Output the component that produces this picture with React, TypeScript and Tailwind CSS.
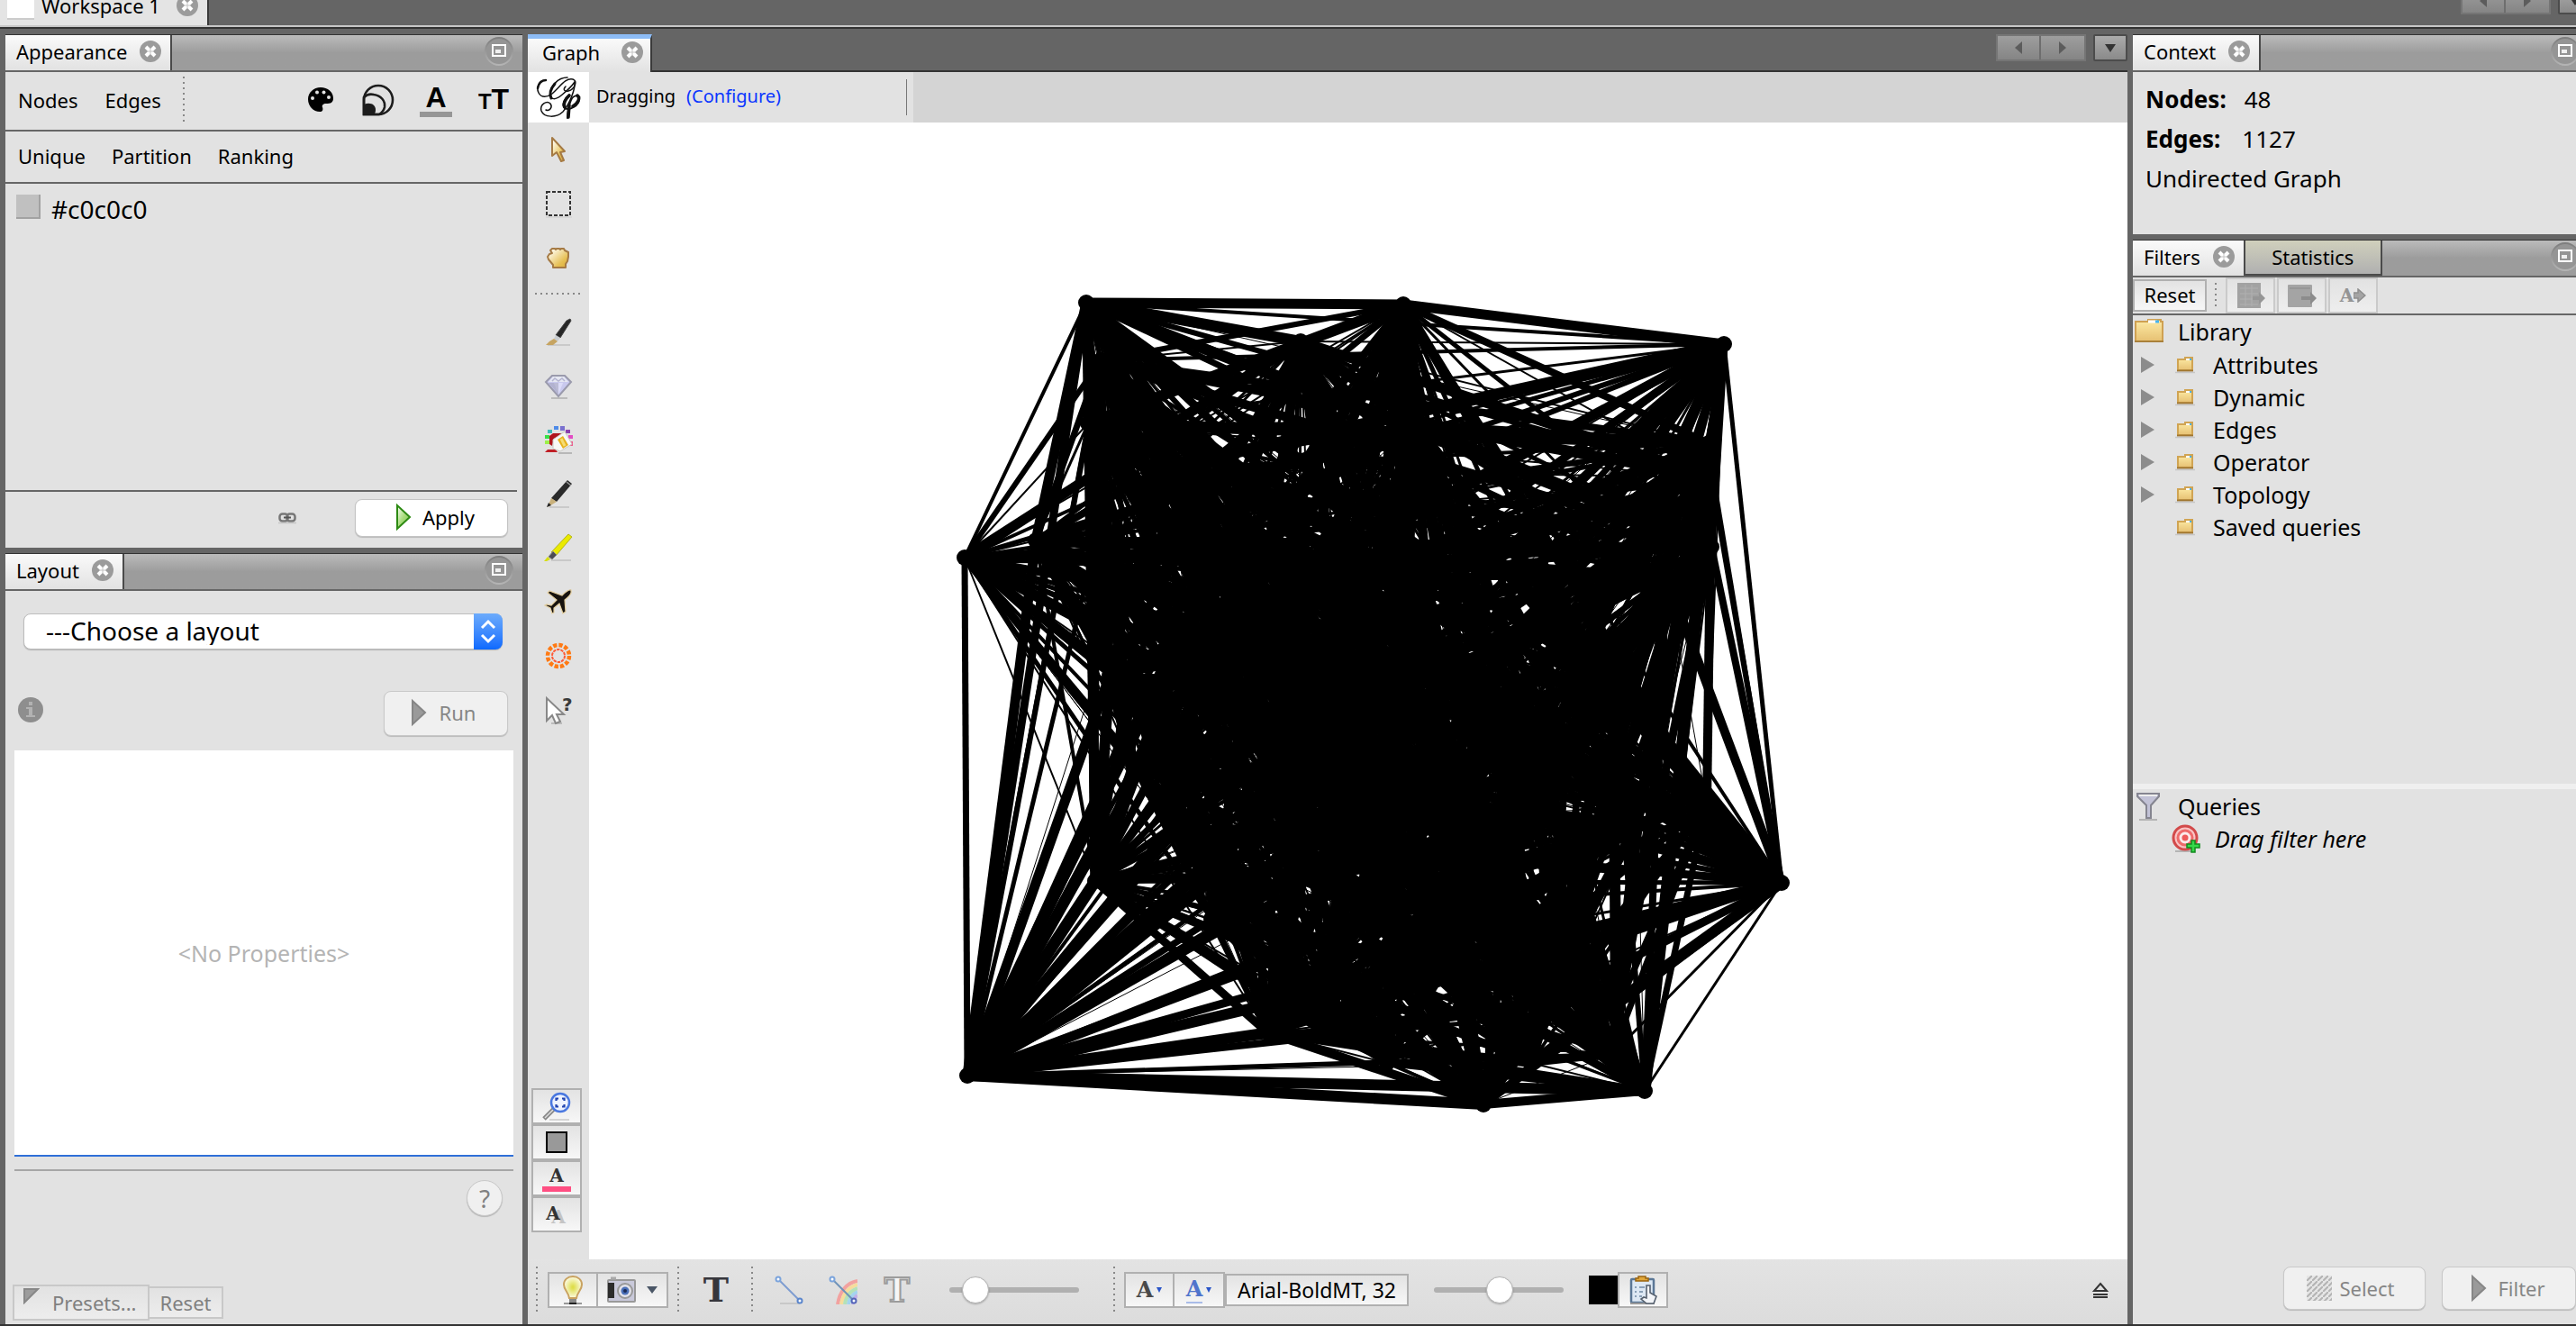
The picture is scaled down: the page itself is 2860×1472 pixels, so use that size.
import type { ReactNode } from "react";

/* ---------- shared chrome ---------- */

function CloseIcon() {
  return (
    <svg width="24" height="24" viewBox="0 0 24 24" aria-hidden="true">
      <circle cx="12" cy="12" r="12" fill="#9b9b9b" />
      <path d="M7 7l10 10M17 7L7 17" stroke="#fff" strokeWidth="4" />
      <path d="M12 8.5v7M8.5 12h7" stroke="#c4c4c4" strokeWidth="1" />
    </svg>
  );
}

function MinimizeButton({ label }: { label: string }) {
  return (
    <button type="button" aria-label={label} className="flex h-8 w-8 shrink-0 items-center justify-center">
      <svg width="32" height="32" viewBox="0 0 32 32" aria-hidden="true">
        <defs>
          <linearGradient id="minRing" x1="0" y1="0" x2="0" y2="1">
            <stop offset="0" stopColor="#7d7d7d" />
            <stop offset="1" stopColor="#b4b4b4" />
          </linearGradient>
        </defs>
        <circle cx="16" cy="16" r="15" fill="#959595" stroke="url(#minRing)" strokeWidth="2" />
        <rect x="9" y="9" width="14" height="12" fill="none" stroke="#fff" strokeWidth="2" />
        <rect x="12" y="14" width="6" height="4" fill="#f0f0f0" />
      </svg>
    </button>
  );
}

function ActiveTab({ title }: { title: string }) {
  return (
    <div className="flex h-full items-center gap-3.5 border-r-2 border-[#4a4a4a] bg-linear-to-b from-[#fafafa] to-[#e2e2e2] pb-1 pl-3 pr-2.5">
      <h2 className="text-[22px] leading-7">{title}</h2>
      <button type="button" aria-label={"Close " + title}>
        <CloseIcon />
      </button>
    </div>
  );
}

function PanelHeader({ title, children, flush }: { title: string; children?: ReactNode; flush?: boolean }) {
  return (
    <header className="flex h-[42px] shrink-0 items-center border-b-2 border-t border-b-[#666] border-t-[#333] bg-linear-to-b from-[#bbb] via-[#9c9c9c] to-[#9c9c9c]">
      <ActiveTab title={title} />
      {children}
      <div className={flush ? "-mr-1 ml-auto pb-1" : "ml-auto pb-1 pr-2.5"}>
        <MinimizeButton label={"Minimize " + title} />
      </div>
    </header>
  );
}

function VDots({ className = "h-[52px]" }: { className?: string }) {
  return (
    <span
      aria-hidden="true"
      className={
        "w-0.5 shrink-0 bg-[repeating-linear-gradient(to_bottom,#888_0_2px,transparent_2px_6px)] " + className
      }
    />
  );
}

function PlayIcon({ tone }: { tone: "green" | "gray" }) {
  return (
    <svg width="18" height="32" viewBox="0 0 18 32" aria-hidden="true">
      <defs>
        <linearGradient id="playGreen" x1="0" y1="0" x2="1" y2="1">
          <stop offset="0" stopColor="#fff" />
          <stop offset="0.5" stopColor="#a8dc7c" />
          <stop offset="1" stopColor="#7cc64e" />
        </linearGradient>
      </defs>
      {tone === "green" ? (
        <path d="M2 3v26L16 16z" fill="url(#playGreen)" stroke="#2c8a12" strokeWidth="2" />
      ) : (
        <path d="M2 3v26L16 16z" fill="#9a9a9a" stroke="#868686" strokeWidth="2" />
      )}
    </svg>
  );
}

function PushButton({ children, disabled, className }: { children: ReactNode; disabled?: boolean; className: string }) {
  return (
    <button
      type="button"
      disabled={disabled}
      className={
        "flex items-center justify-center rounded-lg border text-[22px] leading-7 shadow-[0_1px_1px_rgba(0,0,0,0.18)] " +
        (disabled ? "border-[#c9c9c9] bg-[#f0f0f0] text-[#868686] " : "border-[#c4c4c4] bg-white text-black ") +
        className
      }
    >
      {children}
    </button>
  );
}

/* ---------- left column ---------- */

function AppearancePanel() {
  return (
    <section className="flex h-[570px] shrink-0 flex-col bg-[#e2e2e2]">
      <PanelHeader title="Appearance" />
      <div className="flex h-[66px] shrink-0 items-center border-b-2 border-[#666] pb-0.5 pl-3.5 pr-3.5 text-[22px] leading-7">
        <button type="button">Nodes</button>
        <button type="button" className="ml-[30px]">Edges</button>
        <VDots className="ml-6 h-[52px]" />
        <div className="ml-auto flex items-center gap-7">
          <button type="button" aria-label="Color" className="flex w-9 justify-center">
            <svg width="28" height="30" viewBox="0 0 28 30">
              <path
                d="M14 1C6 1 0 7 0 14c0 8 6 14 13 14 3 0 4-2 3-5-1-2 1-4 4-4 5 0 8-1 8-6C28 6 22 1 14 1z"
                fill="#000"
              />
              <g fill="#e2e2e2">
                <circle cx="5" cy="13" r="2" />
                <circle cx="10" cy="6.500" r="2" />
                <circle cx="17.500" cy="6.500" r="2" />
                <circle cx="23" cy="12" r="2" />
              </g>
            </svg>
          </button>
          <button type="button" aria-label="Size">
            <svg width="36" height="36" viewBox="0 0 36 36">
              <path d="M2 34V18a16 16 0 1 1 16 16z" fill="none" stroke="#1c1c1c" strokeWidth="2.600" />
              <path d="M2 34V15c3-3 7-4 11-3 8 1 13 7 12 14-1 4-3 6-6 8z" fill="none" stroke="#1c1c1c" strokeWidth="2.600" />
              <path d="M2 35V23c7-3 13 0 13 6 0 3-1 5-3 6z" fill="#1c1c1c" />
            </svg>
          </button>
          <button type="button" aria-label="Label color" className="flex w-9 flex-col items-center border-b-[6px] border-[#969696]">
            <span className="font-['Liberation_Sans'] text-[32px] font-bold leading-8">A</span>
          </button>
          <button type="button" aria-label="Label size" className="flex w-9 items-baseline justify-center font-['Liberation_Sans'] font-bold">
            <span className="text-[24px] leading-8">T</span>
            <span className="text-[32px] leading-8">T</span>
          </button>
        </div>
      </div>
      <div className="flex h-[58px] shrink-0 items-center gap-[29px] border-b-2 border-[#666] pb-0.5 pl-3.5 text-[22px] leading-7">
        <button type="button">Unique</button>
        <button type="button">Partition</button>
        <button type="button">Ranking</button>
      </div>
      <div className="flex flex-1 items-start gap-3 px-3 pt-3">
        <button type="button" aria-label="Pick color" className="h-[27px] w-[27px] border-b-2 border-r-2 border-[#a2a2a2] bg-[#c0c0c0]" />
        <span className="text-[28px] leading-8">#c0c0c0</span>
      </div>
      <footer className="mr-1.5 flex h-16 shrink-0 items-center justify-end border-t-2 border-[#666] pb-1 pr-2.5">
        <button type="button" aria-label="Link elements" className="mr-16">
          <svg width="22" height="14" viewBox="0 0 22 14">
            <rect x="2.500" y="2.500" width="9" height="8" rx="3" fill="none" stroke="#777" strokeWidth="2.500" />
            <rect x="10.500" y="2.500" width="9" height="8" rx="3" fill="none" stroke="#777" strokeWidth="2.500" />
            <path d="M7 6.500h8" stroke="#555" strokeWidth="2" />
            <path d="M1 12.500h20" stroke="#c4c4c4" strokeWidth="1.500" />
          </svg>
        </button>
        <PushButton className="h-[42px] w-[170px] gap-3 pb-0.5 pl-2">
          <PlayIcon tone="green" />
          Apply
        </PushButton>
      </footer>
    </section>
  );
}

function LayoutPanel() {
  return (
    <section className="flex min-h-0 flex-1 flex-col bg-[#e2e2e2]">
      <PanelHeader title="Layout" />
      <div className="flex min-h-0 flex-1 flex-col px-2.5">
        <div className="relative ml-2.5 mr-3 mt-[25px]">
          <select
            aria-label="Layout algorithm"
            className="h-10 w-full appearance-none rounded-lg border border-[#bdbdbd] bg-white pb-0.5 pl-6 text-[28px] leading-8 shadow-[0_1px_1px_rgba(0,0,0,0.2)]"
          >
            <option>---Choose a layout</option>
          </select>
          <span className="pointer-events-none absolute inset-y-0 right-0 flex w-8 items-center justify-center rounded-r-lg bg-linear-to-b from-[#6cabfb] to-[#0b69fe]">
            <svg width="18" height="28" viewBox="0 0 18 28" fill="none" stroke="#fff" strokeWidth="3">
              <path d="M2 10l7-7 7 7M2 18l7 7 7-7" />
            </svg>
          </span>
        </div>
        <div className="mt-[46px] flex h-[50px] shrink-0 items-center justify-between pl-1 pr-1.5">
          <button type="button" aria-label="Layout information" disabled className="mb-2">
            <svg width="28" height="28" viewBox="0 0 28 28">
              <circle cx="14" cy="14" r="14" fill="#8e8e8e" />
              <g fill="#b2b2b2">
                <rect x="12" y="5" width="4" height="4" />
                <rect x="12" y="11" width="4" height="10" />
                <rect x="9" y="11" width="3" height="2" />
                <rect x="9" y="20" width="10" height="2" />
              </g>
            </svg>
          </button>
          <PushButton disabled className="h-[50px] w-[138px] gap-3.5 pb-0.5 pr-1.5">
            <PlayIcon tone="gray" />
            Run
          </PushButton>
        </div>
        <div className="mt-4 flex flex-1 items-center justify-center border-b-2 border-[#2f6fd8] bg-white text-[25px] leading-8 text-[#b4b4b4]">
          &lt;No Properties&gt;
        </div>
        <div className="mt-3.5 h-[172px] shrink-0 border-t-2 border-[#a6a6a6]">
          <div className="flex h-full flex-col justify-between pb-1 pt-2.5">
            <button
              type="button"
              disabled
              aria-label="Help"
              className="mr-3 h-10 w-10 self-end rounded-full border border-[#c9c9c9] bg-[#f0f0f0] text-[28px] leading-8 text-[#808080] shadow-[0_1px_1px_rgba(0,0,0,0.2)]"
            >
              ?
            </button>
            <div className="-ml-0.5 flex items-center text-[22px] leading-7 text-[#808080]">
              <button type="button" disabled className="flex h-10 w-[152px] items-start gap-3.5 border-2 border-[#c8c8c8] bg-linear-to-b from-[#e2e2e2] to-[#ededed] pl-2.5">
                <svg width="18" height="20" viewBox="0 0 18 20" aria-hidden="true">
                  <path d="M1 3h15L1 18z" fill="#9c9c9c" stroke="#888" strokeWidth="2" />
                </svg>
                <span className="self-center">Presets...</span>
              </button>
              <button type="button" disabled className="h-9 w-[82px] border-2 border-l-0 border-[#c8c8c8] bg-linear-to-b from-[#e2e2e2] to-[#ededed]">
                Reset
              </button>
            </div>
          </div>
        </div>
      </div>
    </section>
  );
}

/* ---------- tool icons ---------- */

const tool = { width: 32, height: 32, viewBox: "0 0 32 32" };

function ArrowIcon() {
  return (
    <svg {...tool}>
      <defs>
        <linearGradient id="gold" x1="0" y1="0" x2="1" y2="1">
          <stop offset="0.100" stopColor="#fffdf4" />
          <stop offset="0.700" stopColor="#e6bf52" />
          <stop offset="1" stopColor="#dcae3a" />
        </linearGradient>
      </defs>
      <path d="M9 3v20l5-4 5 10 3-1-4-9 5-1z" fill="url(#gold)" stroke="#a57a44" strokeWidth="2" strokeLinejoin="round" />
    </svg>
  );
}
function MarqueeIcon() {
  return (
    <svg {...tool}>
      <rect x="3" y="3" width="26" height="26" fill="none" stroke="#333" strokeWidth="2" strokeDasharray="4 2" />
      <path d="M2 31h29" stroke="#ccc" strokeWidth="1" />
    </svg>
  );
}
function HandIcon() {
  return (
    <svg {...tool}>
      <path
        d="M10 27v-3l-5-6-1-3 2-3 3-1-2-3 2-2h3l1 1 1-1h3l1 1 1-1h3l1 2 2 1 2 1v5l-1 5-2 3v4z"
        fill="url(#gold)"
        stroke="#a57a44"
        strokeWidth="2"
        strokeLinejoin="round"
      />
    </svg>
  );
}
function BrushIcon() {
  return (
    <svg {...tool}>
      <path d="M4 31h25" stroke="#c0c0c0" strokeWidth="1.500" />
      <path d="M29 2l1 2-12 19-5-3L25 4z" fill="#262626" stroke="#444" />
      <path d="M13 20l5 3-3 4-4-3z" fill="#c8ccd0" />
      <path d="M11 24l4 3-5 4H2l4-4z" fill="#c6a461" />
    </svg>
  );
}
function DiamondIcon() {
  return (
    <svg {...tool}>
      <path d="M8 30h18" stroke="#bbb" strokeWidth="2" />
      <path d="M9 5h14l7 7-14 16L2 12z" fill="#c9c9ee" stroke="#9a9aac" strokeWidth="2" />
      <path d="M10 6h12l5 6H5z" fill="#e6e8f2" />
      <path d="M11 13l5 13 5-13z" fill="#dcdcf8" />
      <path d="M16 13v13L5 13z" fill="#9c9cb2" opacity="0.500" />
      <path d="M9 11l3-3 4 3 4-3 3 3" fill="none" stroke="#b4b4d0" strokeWidth="1.500" />
    </svg>
  );
}
function PaintIcon() {
  return (
    <svg {...tool}>
      <g>
        <rect x="1" y="17" width="5" height="4" fill="#9cf04a" />
        <rect x="1" y="11" width="5" height="4" fill="#35e045" />
        <rect x="4" y="5" width="5" height="4" fill="#3eb9b5" />
        <rect x="11" y="1" width="5" height="4" fill="#4e8be8" />
        <rect x="18" y="1" width="5" height="5" fill="#7a70cf" />
        <rect x="24" y="5" width="5" height="4" fill="#8b3fb0" />
        <rect x="27" y="11" width="5" height="4" fill="#e24cc4" />
        <rect x="28" y="18" width="4" height="5" fill="#ee5a8c" />
      </g>
      <path d="M6 12l4-3h10l-4 4-5 2-2 8-3-2z" fill="#b0151c" />
      <path d="M1 30l3-3h9l2 3z" fill="#c01f26" />
      <path d="M10 16l13-9 8 14-13 8-8-3z" fill="#f8f8f6" stroke="#c9c9c4" />
      <path d="M15 16l6-4 6 10-6 4z" fill="#e7b320" />
      <path d="M19 15l4 8" stroke="#f6dd74" strokeWidth="3" />
      <path d="M16 31h15" stroke="#a8a8a8" strokeWidth="1.500" />
    </svg>
  );
}
function PencilIcon() {
  return (
    <svg {...tool}>
      <path d="M6 31h22" stroke="#c0c0c0" strokeWidth="1.500" />
      <path d="M26 1l5 4L14 25l-6-4z" fill="#2a2a2a" />
      <path d="M25 3l5 4" stroke="#9a9a9a" strokeWidth="1.500" />
      <path d="M8 21l6 4-10 6z" fill="#c8b07a" />
      <path d="M3 31l2-5 3 3z" fill="#222" />
    </svg>
  );
}
function HighlighterIcon() {
  return (
    <svg {...tool}>
      <path d="M8 30h22" stroke="#c0c0c0" strokeWidth="1.500" />
      <path d="M27 1l4 3-18 21-5-4z" fill="#eaea00" stroke="#b5b51a" />
      <path d="M10 20l4 4-5 5-4-3z" fill="#4c4c54" stroke="#8c8c8c" />
      <path d="M4 26l3 3-4 2H0z" fill="#d6de12" />
    </svg>
  );
}
function PlaneIcon() {
  return (
    <svg {...tool}>
      <path
        d="M30 3c-3-1-8 4-10 6L6 4 4 6l10 8-6 6-5-1-2 1 6 3 2 6 2-1 0-5 6-5 4 11 3-2-1-13c4-3 8-7 7-10z"
        fill="#17130f"
        stroke="#e4cfa0"
        strokeWidth="1.200"
      />
    </svg>
  );
}
function SunIcon() {
  return (
    <svg {...tool}>
      <g fill="none">
        <circle cx="16" cy="16" r="12" stroke="#ff7a14" strokeWidth="4.500" strokeDasharray="4.300 1.980" />
        <circle cx="16" cy="16" r="7" stroke="#ff5a35" strokeWidth="2" strokeDasharray="3.400 1" />
      </g>
    </svg>
  );
}
function HelpCursorIcon() {
  return (
    <svg {...tool} className="overflow-visible">
      <path d="M8 31h12" stroke="#bbb" strokeWidth="2" />
      <path d="M3 3v25l6-6 4 9 5-2-4-8h8z" fill="#fff" stroke="#888" strokeWidth="2" />
      <text x="20" y="17" fontFamily="DejaVu Sans" fontSize="20" fontWeight="700" fill="#3a3a3a">?</text>
    </svg>
  );
}

const toolsTop: [string, ReactNode][] = [
  ["Direct selection", <ArrowIcon />],
  ["Rectangle selection", <MarqueeIcon />],
  ["Drag", <HandIcon />],
];
const toolsRest: [string, ReactNode][] = [
  ["Painter", <BrushIcon />],
  ["Sizer", <DiamondIcon />],
  ["Brush", <PaintIcon />],
  ["Node pencil", <PencilIcon />],
  ["Edge pencil", <HighlighterIcon />],
  ["Shortest path", <PlaneIcon />],
  ["Heat map", <SunIcon />],
  ["Edit", <HelpCursorIcon />],
];

function ToolButton({ label, children }: { label: string; children: ReactNode }) {
  return (
    <button type="button" aria-label={label} className="flex h-[60px] w-full items-center justify-center">
      {children}
    </button>
  );
}

const bevel = "flex items-center justify-center border-2 border-[#b0b0b0] bg-linear-to-b from-[#e3e3e3] to-[#f7f7f7] ";

function Toolbar() {
  return (
    <aside className="flex w-[68px] shrink-0 flex-col items-center bg-[#e2e2e2]">
      {toolsTop.map(([label, icon]) => (
        <ToolButton key={label} label={label}>{icon}</ToolButton>
      ))}
      <span aria-hidden="true" className="mb-[11px] mt-[9px] h-0.5 w-[52px] shrink-0 bg-[repeating-linear-gradient(to_right,#888_0_2px,transparent_2px_6px)]" />
      {toolsRest.map(([label, icon]) => (
        <ToolButton key={label} label={label}>{icon}</ToolButton>
      ))}
      <div className="mb-[30px] mr-1 mt-auto flex flex-col">
        <button type="button" aria-label="Center on graph" className={bevel + "h-10 w-14"}>
          <svg {...tool}>
            <path d="M8 31h22" stroke="#c8c8c8" strokeWidth="1.500" />
            <path d="M2 30l11-11" stroke="#888" strokeWidth="5" />
            <path d="M3 29l9-9" stroke="#ddd" strokeWidth="1.500" />
            <circle cx="20" cy="12" r="10" fill="#eef3ff" stroke="#4a78e0" strokeWidth="2.500" />
            <path d="M15.500 10V7.500H18M22 7.500h2.500V10M24.500 14v2.500H22M18 16.500h-2.500V14" fill="none" stroke="#2244b0" strokeWidth="2.200" />
          </svg>
        </button>
        <button type="button" aria-label="Reset colors" className={bevel + "h-10 w-14"}>
          <span className="h-6 w-6 border-2 border-black bg-[#999]" />
        </button>
        <button type="button" aria-label="Reset label colors" className={bevel + "h-10 w-14"}>
          <span className="w-8 border-b-[6px] border-[#ff4f82] text-center font-['DejaVu_Serif'] text-[20px] font-bold leading-6 text-[#333]">A</span>
        </button>
        <button type="button" aria-label="Reset label visibility" className={bevel + "h-10 w-14 pb-0.5 pr-2"}>
          <span className="font-['DejaVu_Serif'] text-[20px] font-bold leading-6 text-[#333] [text-shadow:6px_4px_0_#c4c4c4]">A</span>
        </button>
      </div>
    </aside>
  );
}

/* ---------- graph drawing ---------- */

const nodes: [number, number][] = [
  [1206, 336], [1558, 338], [1914, 382], [1071, 619], [1900, 607], [1978, 980],
  [1074, 1194], [1407, 1146], [1647, 1226], [1826, 1211], [1444, 379], [1897, 492],
  [1900, 530], [1216, 978], [1895, 893], [1818, 915], [1150, 600], [1208, 470],
  [1290, 520], [1360, 600], [1310, 720], [1212, 620], [1232, 750], [1258, 850],
  [1300, 920], [1345, 1020], [1446, 820], [1480, 640], [1520, 940], [1560, 760],
  [1570, 470], [1500, 700], [1600, 880], [1620, 1040], [1540, 1180], [1475, 1150],
  [1660, 960], [1700, 800], [1720, 1110], [1795, 1120], [1700, 1180], [1580, 620],
  [1850, 640], [1790, 760], [1740, 850], [1440, 940], [1222, 400], [1790, 1170],
];

const fixedWidths: Record<string, number> = {
  "0-3": 4, "3-6": 7, "2-5": 5, "5-9": 3, "6-8": 12, "8-9": 10, "0-1": 11, "1-2": 11, "6-7": 11, "3-13": 2, "0-2": 4, "3-9": 3,
  "4-5": 8, "2-9": 6, "2-4": 9, "7-8": 10, "6-9": 12, "0-6": 9, "1-6": 10, "6-16": 11, "0-10": 12, "0-13": 10,
};

function edgeWidth(a: number, b: number) {
  const fixed = fixedWidths[a + "-" + b];
  if (fixed) return fixed;
  let h = (a * 73856093) ^ (b * 19349663);
  h = Math.imul(h ^ (h >>> 13), 1274126177);
  h = (h ^ (h >>> 16)) >>> 0;
  const t = (h % 1000) / 1000;
  return Math.round(1 + 9 * t * t + 3 * t);
}

const edges = nodes.flatMap(([x1, y1], a) =>
  nodes.slice(a + 1).map(([x2, y2], k) => ({ x1, y1, x2, y2, w: edgeWidth(a, a + 1 + k), id: a + "-" + (a + 1 + k) })),
);

function GraphCanvas() {
  return (
    <svg role="img" aria-label="Undirected graph" viewBox="654 136 1708 1262" className="h-full w-full">
      <g stroke="#000">
        {edges.map((e) => (
          <line key={e.id} x1={e.x1} y1={e.y1} x2={e.x2} y2={e.y2} strokeWidth={e.w} />
        ))}
      </g>
      {nodes.map(([x, y]) => (
        <circle key={x + "," + y} cx={x} cy={y} r="9" />
      ))}
    </svg>
  );
}

/* ---------- graph window ---------- */

function GephiLogo() {
  return (
    <svg width="52" height="50" viewBox="0 0 52 50" aria-label="Gephi" fill="none" stroke="#111" strokeLinecap="round">
      <path d="M12 6C4 6 1 14 4 20c3 6 10 5 15 1C28 13 34 3 42 5c6 2 2 11-5 13-5 1-6-2-3-5" strokeWidth="1.500" />
      <path d="M12 6c-5 0-8 4-9 9" strokeWidth="2.500" />
      <path d="M36 3C25 3 17 13 17 22c0 6 6 6 12 1 5-4 11-9 15-15 1 8-6 25-13 33-7 7-21 7-24-1-2-7 6-12 10-8 3 4-1 9-5 7" strokeWidth="1.500" />
      <path d="M22 10c-5 6-6 12-4 16" strokeWidth="3" />
      <path d="M38 22c-5 4-9 12-5 15 6 3 16-3 16-10 0-5-6-5-9 1-2 5-4 13-4 20" strokeWidth="2" />
      <path d="M38 23c-4 4-7 9-5 13M47 23c4 3 0 9-5 12M38 34l-1 13" strokeWidth="3.500" />
    </svg>
  );
}

function TabNav({ scope }: { scope: string }) {
  const face = "flex items-center justify-center bg-linear-to-b from-[#9e9e9e] to-[#858585] ";
  return (
    <div className="flex gap-2">
      <div className="flex border-2 border-[#757575]">
        <button type="button" aria-label={"Previous " + scope} className={face + "h-[26px] w-12 border-r-2 border-[#6e6e6e]"}>
          <svg width="10" height="14" viewBox="0 0 10 14"><path d="M9 0v14L1 7z" fill="#5c5c5c" /></svg>
        </button>
        <button type="button" aria-label={"Next " + scope} className={face + "h-[26px] w-12"}>
          <svg width="10" height="14" viewBox="0 0 10 14"><path d="M1 0v14l8-7z" fill="#5c5c5c" /></svg>
        </button>
      </div>
      <button type="button" aria-label={scope + " list"} className="flex h-[30px] w-[38px] items-center justify-center rounded-xs border-2 border-[#4c4c4c] bg-linear-to-b from-[#ababab] to-[#8a8a8a]">
        <svg width="12" height="9" viewBox="0 0 12 9"><path d="M0 0h12L6 9z" fill="#333" /></svg>
      </button>
    </div>
  );
}

function Slider({ label, value, className }: { label: string; value: number; className: string }) {
  return (
    <input
      type="range"
      aria-label={label}
      defaultValue={value}
      className={
        "h-8 w-36 appearance-none bg-transparent [&::-webkit-slider-runnable-track]:h-1.5 [&::-webkit-slider-runnable-track]:rounded-full [&::-webkit-slider-runnable-track]:bg-[#b0b0b0] [&::-webkit-slider-thumb]:-mt-3 [&::-webkit-slider-thumb]:h-[30px] [&::-webkit-slider-thumb]:w-[30px] [&::-webkit-slider-thumb]:appearance-none [&::-webkit-slider-thumb]:rounded-full [&::-webkit-slider-thumb]:border [&::-webkit-slider-thumb]:border-[#b4b4b4] [&::-webkit-slider-thumb]:bg-white [&::-webkit-slider-thumb]:shadow-[0_1px_2px_rgba(0,0,0,0.25)] " +
        className
      }
    />
  );
}

function BottomBar() {
  return (
    <footer className="flex h-[72px] shrink-0 items-center bg-linear-to-b from-[#e3e3e3] to-[#dcdcdc] pb-1 pl-[9px] pr-5">
      <VDots />
      <div className="ml-[11px] flex">
        <button type="button" aria-label="Background color" className={bevel + "h-10 w-14"}>
          <svg {...tool}>
            <defs>
              <radialGradient id="bulb">
                <stop offset="0.100" stopColor="#dede4c" />
                <stop offset="1" stopColor="#fdfbe4" />
              </radialGradient>
            </defs>
            <path d="M6 31h20" stroke="#999" strokeWidth="2" />
            <path d="M16 1c-6 0-10 4-10 9 0 6 5 8 6 15h8c1-7 6-9 6-15 0-5-4-9-10-9z" fill="url(#bulb)" stroke="#c9a260" strokeWidth="2" />
            <path d="M12 26h8v4h-8z" fill="#888" />
            <path d="M12 31h8" stroke="#222" strokeWidth="2" />
          </svg>
        </button>
        <button type="button" aria-label="Take screenshot" className={bevel + "-ml-0.5 h-10 w-20 gap-3"}>
          <svg {...tool}>
            <rect x="1" y="5" width="30" height="24" rx="1" fill="#c9c9da" stroke="#999" strokeWidth="2" />
            <path d="M4 3h6" stroke="#aaa" strokeWidth="3" />
            <rect x="1" y="8" width="7" height="17" fill="#2c2c2c" />
            <circle cx="20" cy="17" r="8" fill="#e2e2ea" stroke="#999" strokeWidth="2" />
            <circle cx="20" cy="17" r="4.500" fill="#4a6fb8" />
            <circle cx="20" cy="17" r="2" fill="#1b2a55" />
          </svg>
          <svg width="12" height="8" viewBox="0 0 12 8"><path d="M0 0h12L6 8z" fill="#4a5666" /></svg>
        </button>
      </div>
      <VDots className="ml-2.5 h-[52px]" />
      <button type="button" aria-label="Show node labels" className="ml-[25px] w-8 font-['DejaVu_Serif'] text-[38px] font-bold leading-10 text-[#36363c]">T</button>
      <VDots className="ml-[23px] h-[52px]" />
      <button type="button" aria-label="Show edges" className="ml-6">
        <svg {...tool}>
          <path d="M6 31h22" stroke="#c8c8c8" strokeWidth="2" />
          <path d="M4 4l24 24" stroke="#7d9cd0" strokeWidth="2" />
          <circle cx="4" cy="4" r="2.500" fill="#fff" stroke="#7ba4dc" strokeWidth="2" />
          <circle cx="28" cy="28" r="2.500" fill="#fff" stroke="#5b86cc" strokeWidth="2" />
        </svg>
      </button>
      <button type="button" aria-label="Edge color from nodes" className="ml-7">
        <svg {...tool}>
          <g fill="none" strokeWidth="4">
            <path d="M10 32C12 18 20 8 32 6" stroke="#f2a2a0" />
            <path d="M14 32c2-12 8-19 18-22" stroke="#f6dc9c" />
            <path d="M18 32c1-9 6-15 14-18" stroke="#b4e2b8" />
            <path d="M22 32c1-7 4-11 10-14" stroke="#a3d4ee" />
            <path d="M27 32c0-5 2-8 5-10" stroke="#c0b0e8" />
          </g>
          <path d="M4 4l24 24" stroke="#6f92b8" strokeWidth="2" />
          <circle cx="4" cy="4" r="2.500" fill="#fff" stroke="#7ba4dc" strokeWidth="2" />
          <circle cx="28" cy="28" r="2.500" fill="#fff" stroke="#5566b8" strokeWidth="2" />
        </svg>
      </button>
      <button type="button" aria-label="Show edge labels" className="ml-7 w-8 font-['DejaVu_Serif'] text-[38px] font-bold leading-10 text-[#f6f6f6] [-webkit-text-stroke:2px_#9c9c9c]">T</button>
      <Slider label="Edge weight scale" value={12} className="ml-[42px]" />
      <VDots className="ml-[38px] h-[52px]" />
      <div className="ml-2.5 flex items-center">
        <button type="button" aria-label="Label size mode" className={bevel + "h-10 w-14 gap-1"}>
          <span className="font-['DejaVu_Serif'] text-[24px] font-bold leading-7 text-[#4a4a4a]">A</span>
          <svg width="6" height="6" viewBox="0 0 6 6"><path d="M0 0h6L3 6z" fill="#2a55c8" /></svg>
        </button>
        <button type="button" aria-label="Label color mode" className={bevel + "-ml-0.5 h-10 w-[58px] gap-1"}>
          <span className="border-b-2 border-[#a9bce8] font-['DejaVu_Serif'] text-[24px] font-bold leading-7 text-[#4f74cc]">A</span>
          <svg width="6" height="6" viewBox="0 0 6 6"><path d="M0 0h6L3 6z" fill="#2a55c8" /></svg>
        </button>
        <button type="button" className={bevel + "h-9 w-[204px] text-[23px] leading-7"}>Arial-BoldMT, 32</button>
      </div>
      <Slider label="Label font scale" value={51} className="ml-7" />
      <button type="button" aria-label="Default label color" className="ml-7 h-8 w-8 bg-black" />
      <button type="button" aria-label="Label attributes" className={bevel + "h-10 w-14"}>
        <svg {...tool}>
          <rect x="3" y="4" width="25" height="26" rx="1" fill="#dde8f4" stroke="#5b7796" strokeWidth="2.500" />
          <path d="M2 31h27" stroke="#999" strokeWidth="2" />
          <path d="M8 6h14V3H19V1h-8v2H8z" fill="#e2a83a" stroke="#9a6410" strokeWidth="1.500" />
          <path d="M7 13h2M12 13h6M7 18h2M12 18h4M7 23h2M12 23h3" stroke="#8aa0b8" strokeWidth="2" />
          <path d="M20 11h4v8l7 4-3 8h-8l-6-5 3-2 3 1z" fill="#f2f4f8" stroke="#55606e" strokeWidth="1.600" />
        </svg>
      </button>
      <button type="button" aria-label="Show settings panel" className="ml-auto">
        <svg width="20" height="18" viewBox="0 0 20 18" fill="none" stroke="#333" strokeWidth="2">
          <path d="M10 2l7 8H3zM2 14h16M2 17h16" />
        </svg>
      </button>
    </footer>
  );
}

function GraphWindow() {
  return (
    <main className="flex min-w-0 flex-1 flex-col">
      <header className="flex h-[42px] shrink-0 items-stretch justify-between">
        <div className="flex w-[138px] items-center justify-between border-r-2 border-t-[5px] border-r-[#3a3a3a] border-t-[#8dbcf5] bg-linear-to-b from-[#fafafa] to-[#e2e2e2] pb-[7px] pl-4 pr-2">
          <h2 className="text-[22px] leading-7">Graph</h2>
          <button type="button" aria-label="Close Graph"><CloseIcon /></button>
        </div>
        <div className="flex flex-1 items-start justify-end border-b-2 border-[#333]">
          <TabNav scope="document" />
        </div>
      </header>
      <div className="flex h-14 shrink-0 bg-[#d4d4d4]">
        <div className="flex w-[68px] items-center justify-center bg-white"><GephiLogo /></div>
        <div className="flex w-[360px] items-center justify-between bg-[#e2e2e2] pl-2 pr-[7px] text-[20px] leading-7">
          <span className="flex gap-3 pb-0.5">
            Dragging
            <a href="#configure" className="text-[#0b36ff]">(Configure)</a>
          </span>
          <span className="h-10 w-px bg-[#777]" />
        </div>
      </div>
      <div className="flex min-h-0 flex-1">
        <Toolbar />
        <div className="min-w-0 flex-1 bg-white"><GraphCanvas /></div>
      </div>
      <BottomBar />
    </main>
  );
}

/* ---------- right column ---------- */

function FolderIcon({ large }: { large?: boolean }) {
  return (
    <svg width={large ? 34 : 22} height={large ? 28 : 20} viewBox={large ? "0 0 34 28" : "0 0 22 20"} aria-hidden="true">
      <defs>
        <linearGradient id="folder" x1="0" y1="0" x2="0" y2="1">
          <stop offset="0" stopColor="#fdeba6" />
          <stop offset="1" stopColor="#e6c072" />
        </linearGradient>
      </defs>
      {large ? (
        <>
          <path d="M2 3h14V1h14v2h2v22H2z" fill="url(#folder)" stroke="#cfa152" strokeWidth="2" />
          <path d="M16 3h10" stroke="#fff" strokeWidth="3" />
          <path d="M24 3h4" stroke="#45b4ee" strokeWidth="3" />
          <path d="M1 25h32" stroke="#a9803a" strokeWidth="2" />
        </>
      ) : (
        <>
          <path d="M3 4h8V2h8v14H3z" fill="url(#folder)" stroke="#d0a453" strokeWidth="2" />
          <path d="M12 4h5" stroke="#fff" strokeWidth="2" />
          <path d="M16 4h2" stroke="#45b4ee" strokeWidth="2" />
          <path d="M2 16.500h18" stroke="#a07630" strokeWidth="2" />
          <path d="M0 18.500h22" stroke="#c6c6c6" strokeWidth="1.500" />
        </>
      )}
    </svg>
  );
}

const library = [
  { name: "Attributes", open: true },
  { name: "Dynamic", open: true },
  { name: "Edges", open: true },
  { name: "Operator", open: true },
  { name: "Topology", open: true },
  { name: "Saved queries", open: false },
];

function ContextPanel() {
  return (
    <section className="flex h-[222px] shrink-0 flex-col bg-[#e2e2e2]">
      <PanelHeader title="Context" flush />
      <div className="px-3.5 pt-2 text-[26px] leading-[44px]">
        <p><b className="mr-5">Nodes:</b>48</p>
        <p><b className="mr-6">Edges:</b>1127</p>
        <p>Undirected Graph</p>
      </div>
    </section>
  );
}

function FiltersPanel() {
  const ghost = "flex h-10 w-[55px] items-center justify-center border-2 border-[#cacaca] bg-linear-to-b from-[#e2e2e2] to-[#eee]";
  return (
    <section className="flex min-h-0 flex-1 flex-col bg-[#e2e2e2]">
      <PanelHeader title="Filters" flush>
        <button type="button" className="flex h-full w-[152px] items-center justify-center border-b-2 border-r-2 border-[#4a4a4a] bg-linear-to-b from-[#d0d0bc] to-[#b0b0b0] pb-0.5 text-[22px] leading-7">
          Statistics
        </button>
      </PanelHeader>
      <div className="flex h-[42px] shrink-0 items-center border-b-2 border-[#666]">
        <button type="button" className={bevel + "h-9 w-[82px] pb-0.5 text-[22px] leading-7"}>Reset</button>
        <VDots className="ml-[9px] mr-2.5 h-7" />
        <div className="flex gap-0.5">
          <button type="button" disabled aria-label="Export to column" className={ghost}>
            <svg {...tool}>
              <rect x="1" y="2" width="26" height="28" fill="#a2a2a2" />
              <path d="M4 8h20M4 14h20M4 20h20M4 26h20M10 4v24M17 4v24" stroke="#b0b0b0" strokeWidth="1" />
              <path d="M18 17h7v-5l7 7-7 7v-5h-7z" fill="#969696" />
            </svg>
          </button>
          <button type="button" disabled aria-label="Export to workspace" className={ghost}>
            <svg {...tool}>
              <rect x="0" y="4" width="27" height="25" rx="1" fill="#a4a4a4" />
              <path d="M2 8h23" stroke="#979797" strokeWidth="2" />
              <path d="M15 17h10v-5l7 7-7 7v-5H15z" fill="#8c8c8c" />
            </svg>
          </button>
          <button type="button" disabled aria-label="Hide labels" className={ghost}>
            <span className="font-['DejaVu_Serif'] text-[20px] font-bold leading-6 text-[#949494]">A</span>
            <svg width="14" height="16" viewBox="0 0 14 16"><path d="M0 5h5V1l8 7-8 7v-4H0z" fill="#a4a4a4" stroke="#8e8e8e" strokeWidth="1.500" /></svg>
          </button>
        </div>
      </div>
      <div className="h-[520px] shrink-0 text-[25px]">
        <div className="flex h-[38px] items-center gap-[15px] pb-0.5 pl-px">
          <FolderIcon large />
          <span className="leading-8">Library</span>
        </div>
        <ul>
          {library.map((item) => (
            <li key={item.name} className="flex h-9 items-center pb-0.5 pl-[9px]">
              {item.open ? (
                <button type="button" aria-label={"Expand " + item.name}>
                  <svg width="16" height="18" viewBox="0 0 16 18"><path d="M0 0v18l15-9z" fill="#8c8c8c" /></svg>
                </button>
              ) : (
                <span className="w-4" />
              )}
              <span className="ml-[22px] mr-5"><FolderIcon /></span>
              <span className="leading-8">{item.name}</span>
            </li>
          ))}
        </ul>
      </div>
      <div className="h-1.5 shrink-0 bg-[#efefef]" />
      <div className="flex min-h-0 flex-1 flex-col pb-4 text-[25px]">
        <div className="flex h-[38px] items-center gap-[18px] pl-0.5">
          <svg width="30" height="32" viewBox="0 0 30 32" aria-hidden="true">
            <path d="M5 31h20" stroke="#b4b4b4" strokeWidth="2" />
            <path d="M3 2h24v3l-9 10v14h-5V15L3 5z" fill="#c2c2d6" stroke="#858590" strokeWidth="2" />
            <path d="M5 4h20" stroke="#eee" strokeWidth="2" />
          </svg>
          <span className="leading-8">Queries</span>
        </div>
        <div className="flex h-9 items-center gap-4 pb-0.5 pl-[43px]">
          <svg width="32" height="32" viewBox="0 0 32 32" aria-hidden="true">
            <path d="M4 30h20" stroke="#b4b4b4" strokeWidth="2" />
            <circle cx="15" cy="15" r="13" fill="#f9c4c4" stroke="#d24a4a" strokeWidth="3" />
            <circle cx="15" cy="15" r="8" fill="#fbeaea" stroke="#ee6a6a" strokeWidth="3" />
            <circle cx="15" cy="15" r="3.500" fill="#ee5a5a" />
            <path d="M22 18h4v4h5v4h-5v5h-4v-5h-5v-4h5z" fill="#35d94a" stroke="#128a1e" strokeWidth="1.500" />
          </svg>
          <em className="leading-8">Drag filter here</em>
        </div>
        <div className="mt-auto flex justify-end gap-[18px]">
          <PushButton disabled className="h-12 w-[158px] gap-2 pr-2">
            <svg width="28" height="28" viewBox="0 0 28 28" aria-hidden="true">
              <defs>
                <pattern id="hatch" width="6" height="6" patternUnits="userSpaceOnUse">
                  <path d="M0 6L6 0" stroke="#b4b4b4" strokeWidth="2" />
                </pattern>
              </defs>
              <rect width="28" height="28" fill="#e6e6e6" />
              <rect width="28" height="28" fill="url(#hatch)" />
            </svg>
            Select
          </PushButton>
          <PushButton disabled className="h-12 w-[149px] gap-3 pr-0.5">
            <PlayIcon tone="gray" />
            Filter
          </PushButton>
        </div>
      </div>
    </section>
  );
}

/* ---------- application ---------- */

export default function App() {
  return (
    <div className="flex h-screen min-w-[1600px] flex-col overflow-hidden bg-[#656565] font-['Noto_Sans',sans-serif] text-black">
      <header className="flex h-8 shrink-0 items-end justify-between overflow-hidden border-b-2 border-[#333] shadow-[inset_0_-2px_0_#c8c8c8]">
        <div className="mb-0.5 flex h-11 items-center gap-2 border-r-2 border-[#3a3a3a] bg-[#e4e4e4] pl-2 pr-2.5">
          <span className="h-8 w-[30px] border-b-2 border-[#ccc] bg-white" />
          <h1 className="text-[22px] leading-7">Workspace 1</h1>
          <button type="button" aria-label="Close Workspace 1" className="ml-2.5"><CloseIcon /></button>
        </div>
        <div className="-mr-[18px] mb-3.5">
          <TabNav scope="workspace" />
        </div>
      </header>
      <div className="flex min-h-0 flex-1 gap-1.5 pl-1.5 pt-1.5">
        <div className="flex w-[574px] shrink-0 flex-col gap-1.5">
          <AppearancePanel />
          <LayoutPanel />
        </div>
        <GraphWindow />
        <div className="flex w-[492px] shrink-0 flex-col gap-1.5">
          <ContextPanel />
          <FiltersPanel />
        </div>
      </div>
      <div className="h-0.5 shrink-0 bg-[#333]" />
    </div>
  );
}
